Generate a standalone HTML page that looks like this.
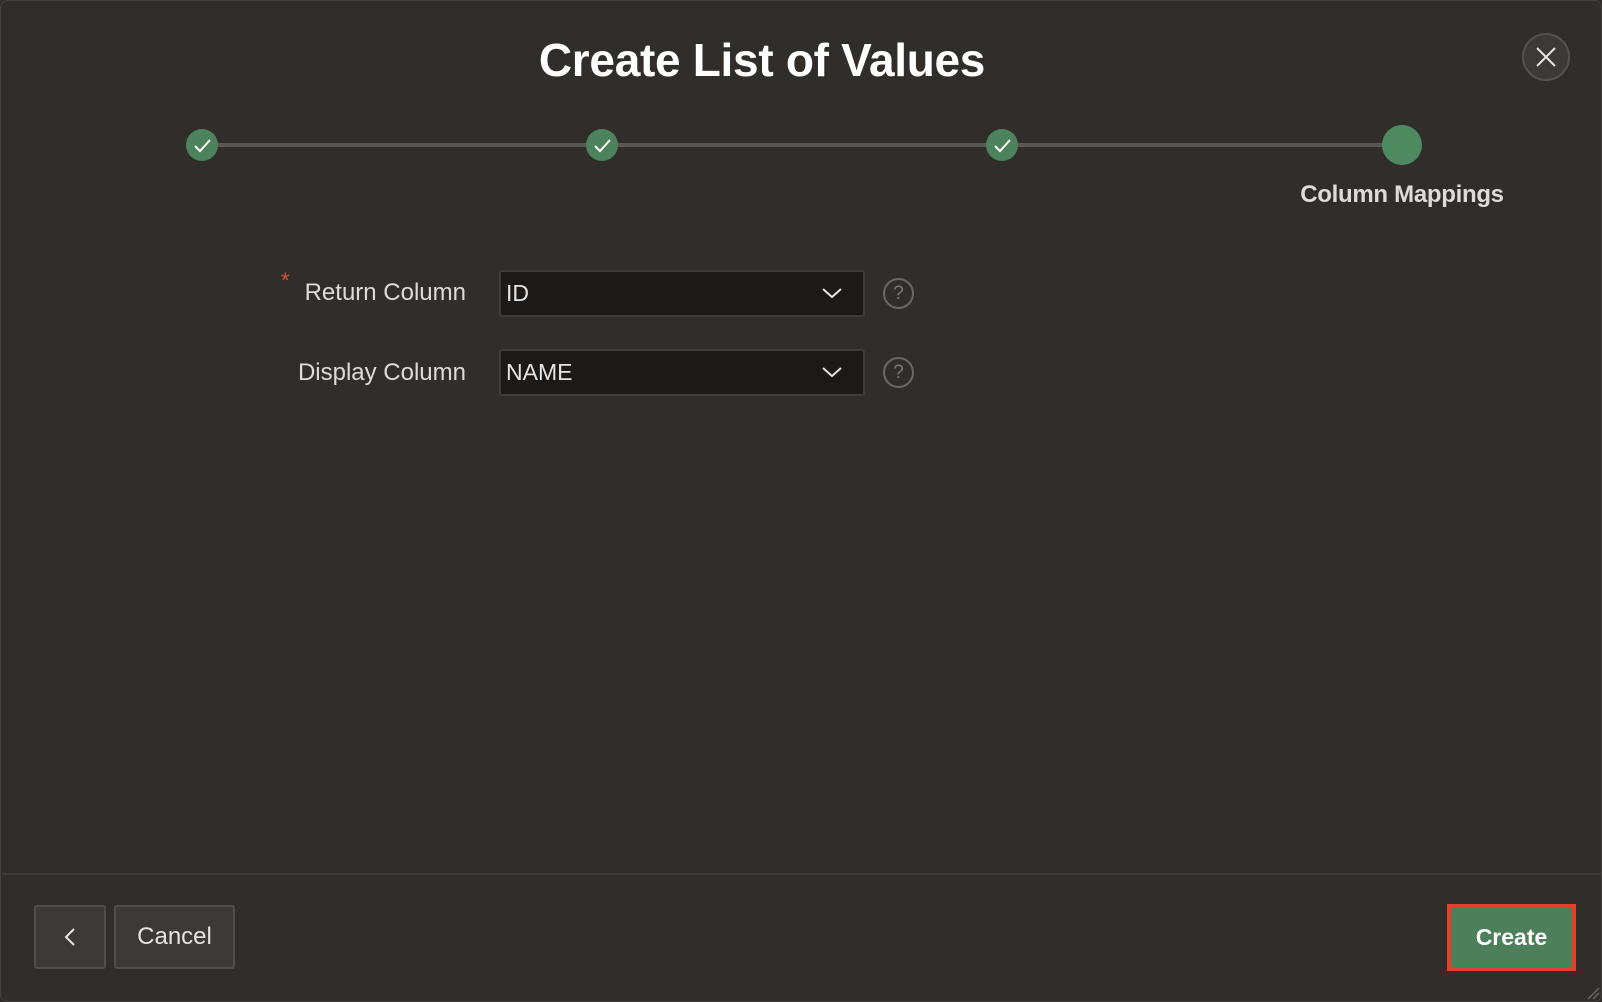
<!DOCTYPE html>
<html><head><style>
*{margin:0;padding:0;box-sizing:border-box}
body{width:1602px;height:1002px;background:#312d2a;font-family:"Liberation Sans",sans-serif;position:relative;overflow:hidden;color:#e6e4e1}
.frame{position:absolute;left:0;top:0;width:1602px;height:1002px;border:1px solid #45413e;border-radius:8px;pointer-events:none}
.abs{position:absolute}
.title{left:0;width:1524px;text-align:center;top:33px;font-size:46px;font-weight:bold;color:#fff;letter-spacing:-0.3px}
.close{left:1522px;top:33px;width:48px;height:48px;border-radius:50%;background:#3c3936;border:2px solid #55514e}
.line{top:143px;left:202px;width:1200px;height:4px;background:#595552}
.dot{width:32px;height:32px;border-radius:50%;background:#4c825c;top:129px}
.last{left:1382px;top:125px;width:40px;height:40px;border-radius:50%;background:#4e8a60}
.step{top:181px;left:1252px;width:300px;text-align:center;font-size:24px;font-weight:bold;color:#dedbd8;letter-spacing:-0.3px}
.lbl{font-size:24px;color:#dedbd8;text-align:right;width:300px;left:166px}
.sel{left:499px;width:366px;height:47px;background:#1b1a18;border:2px solid #3f3c39;border-radius:3px;font-size:23px;color:#e6e4e1;padding:8px 0 0 5px}
.help{left:883px;width:31px;height:31px;border-radius:50%;border:2px solid #6b6764;color:#7b7774;font-size:19px;text-align:center;line-height:27px}
.footer{left:2px;right:0;top:873px;height:2px;background:#3e3a37}
.btn{top:905px;height:64px;background:#3c3936;border:2px solid #514d4a;border-radius:3px;font-size:24px;color:#e6e4e1;text-align:center;line-height:60px}
.create{left:1447px;top:904px;width:129px;height:67px;border:4px solid #e3402b;background:#4e7f5b;color:#fff;font-weight:bold;font-size:23px;text-align:center;line-height:59px}
</style></head><body>
<div class="abs title">Create List of Values</div>
<div class="abs close"><svg width="44" height="44" viewBox="0 0 44 44" style="position:absolute;left:0;top:0"><path d="M13 13L31 31M31 13L13 31" stroke="#e6e4e1" stroke-width="2" fill="none"/></svg></div>
<div class="abs line"></div>
<div class="abs dot" style="left:186px"><svg width="32" height="32"><path d="M9 17l5 5 10-11" stroke="#fff" stroke-width="2" fill="none"/></svg></div>
<div class="abs dot" style="left:586px"><svg width="32" height="32"><path d="M9 17l5 5 10-11" stroke="#fff" stroke-width="2" fill="none"/></svg></div>
<div class="abs dot" style="left:986px"><svg width="32" height="32"><path d="M9 17l5 5 10-11" stroke="#fff" stroke-width="2" fill="none"/></svg></div>
<div class="abs last"></div>
<div class="abs step">Column Mappings</div>
<div class="abs" style="left:281px;top:268px;color:#d9503a;font-size:22px">*</div>
<div class="abs lbl" style="top:279px">Return Column</div>
<div class="abs lbl" style="top:359px">Display Column</div>
<div class="abs sel" style="top:270px">ID<svg class="abs" style="left:320px;top:13px" width="22" height="16"><path d="M2 4l9 8 9-8" stroke="#e6e4e1" stroke-width="2" fill="none"/></svg></div>
<div class="abs sel" style="top:349px">NAME<svg class="abs" style="left:320px;top:13px" width="22" height="16"><path d="M2 4l9 8 9-8" stroke="#e6e4e1" stroke-width="2" fill="none"/></svg></div>
<div class="abs help" style="top:278px">?</div>
<div class="abs help" style="top:357px">?</div>
<div class="abs footer"></div>
<div class="abs btn" style="left:34px;width:72px"><svg width="68" height="60"><path d="M38 22l-8 8 8 8" stroke="#e6e4e1" stroke-width="2" fill="none"/></svg></div>
<div class="abs btn" style="left:114px;width:121px">Cancel</div>
<div class="abs create">Create</div>
<svg class="abs" style="left:1584px;top:984px" width="16" height="16"><path d="M4 15L15 4M9 15L15 9" stroke="#6b6764" stroke-width="1.5"/></svg>
<div class="frame"></div>
</body></html>
